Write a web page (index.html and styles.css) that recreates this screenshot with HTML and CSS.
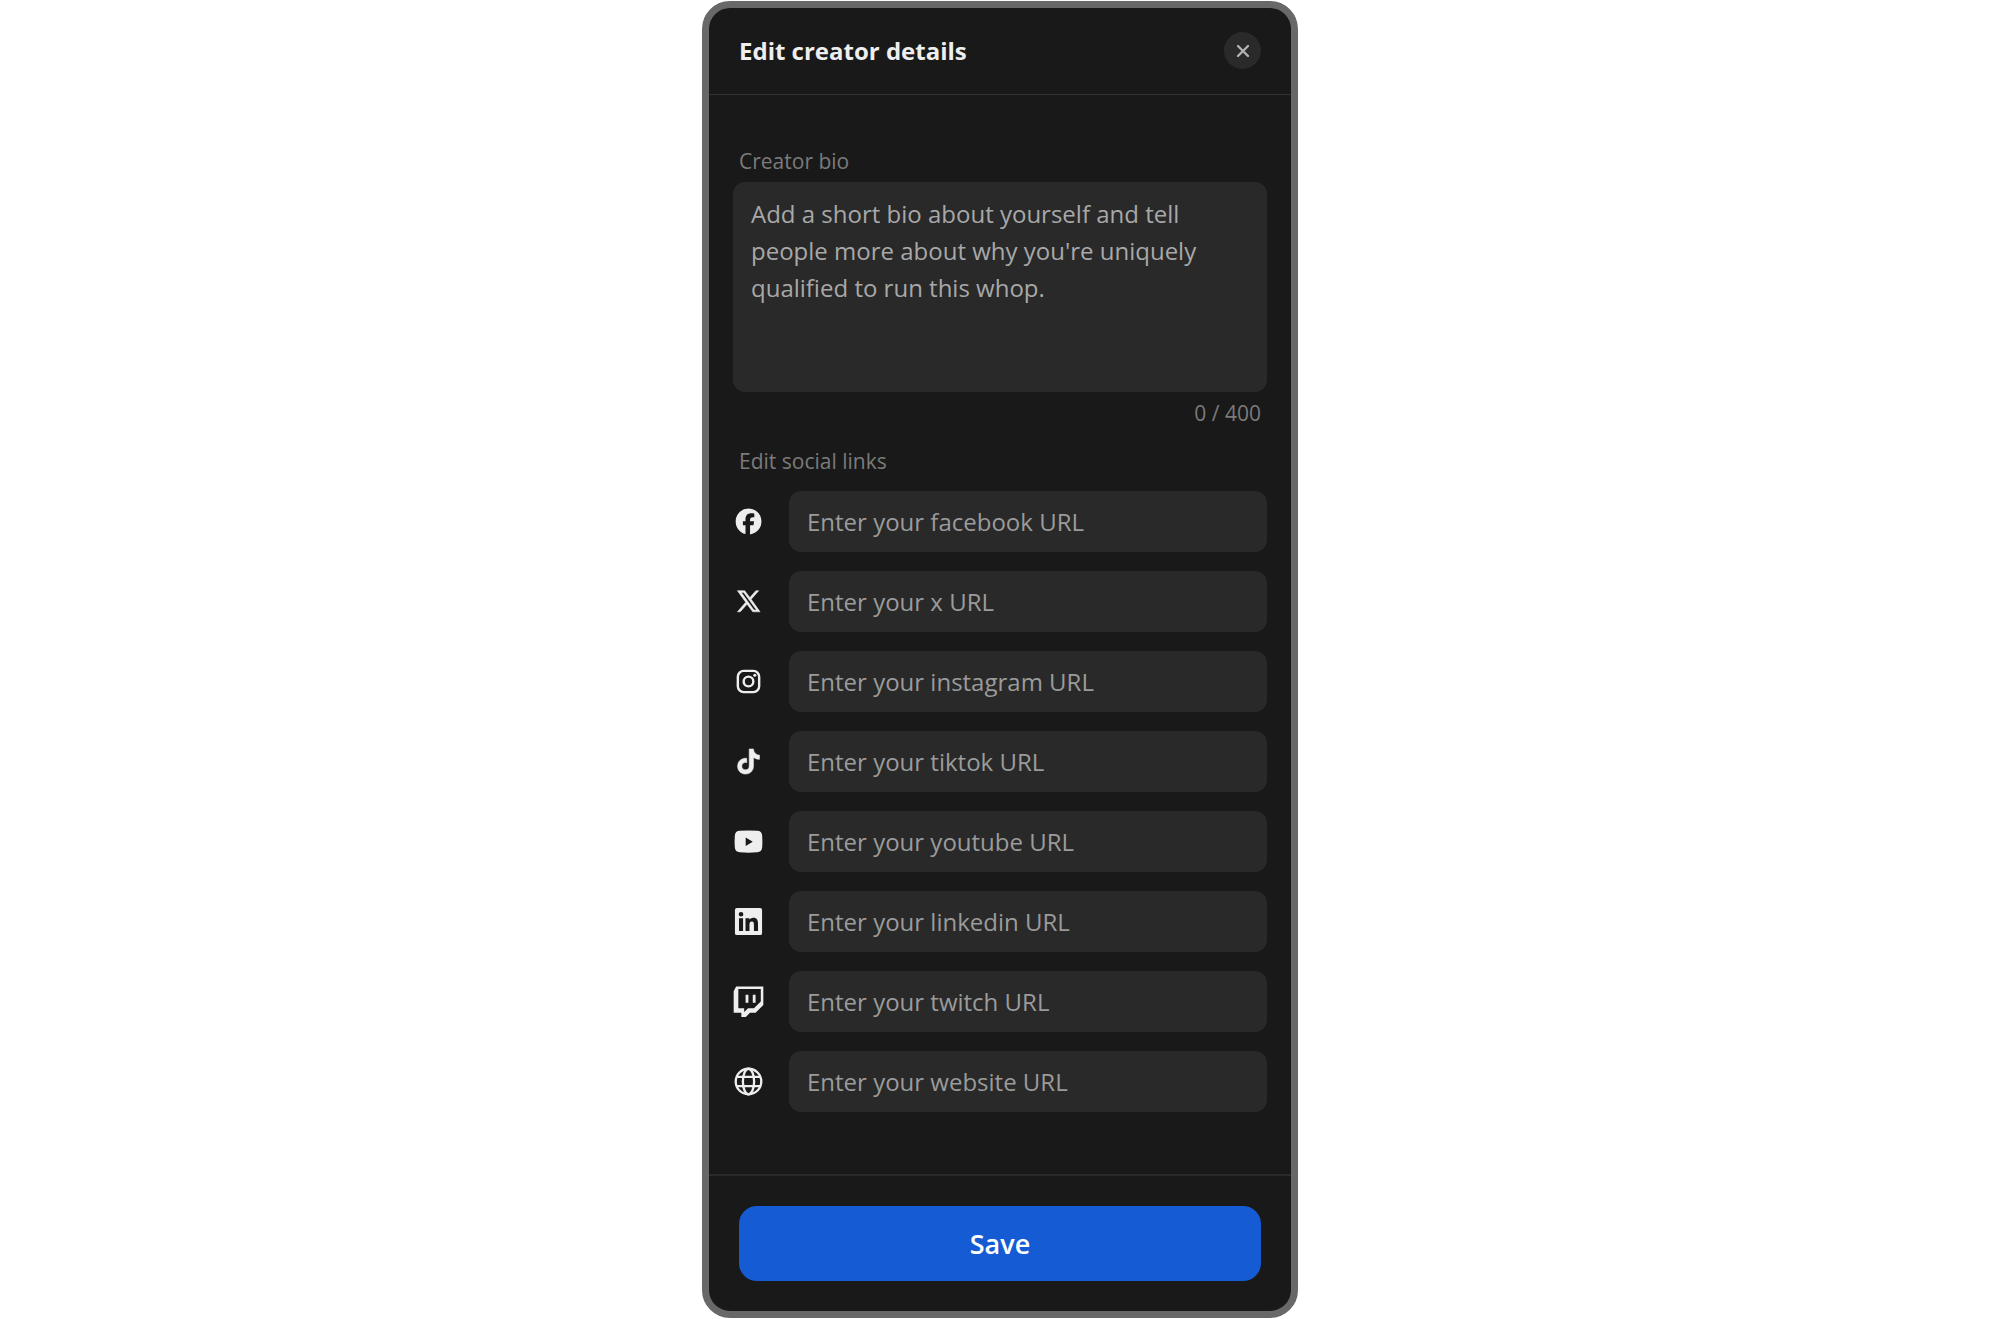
FILE: index.html
```html
<!DOCTYPE html>
<html lang="en">
  <head>
    <meta charset="utf-8" />
    <meta name="viewport" content="width=device-width, initial-scale=1" />
    <title>Edit creator details</title>

    <link rel="stylesheet" href="styles.css">
  </head>

  <body>
    <form class="modal">
      <header class="modal-header">
        <h1 class="title">Edit creator details</h1>
        <button type="button" class="close" aria-label="Close">
          <svg viewBox="0 0 14 14" width="14" height="14">
            <path d="M2 2l10 10M12 2L2 12" fill="none" stroke="currentColor" stroke-width="2.3" stroke-linecap="round" />
          </svg>
        </button>
      </header>

      <main class="modal-body">
        <label class="label" for="bio">Creator bio</label>
        <textarea class="field bio" id="bio" maxlength="400" placeholder="Add a short bio about yourself and tell people more about why you're uniquely qualified to run this whop."></textarea>
        <p class="counter">0 / 400</p>

        <h2 class="label links-label">Edit social links</h2>
        <div class="links">
          <div class="link-row">
            <label class="icon" for="facebook" aria-label="Facebook">
              <svg viewBox="0 0 32 32">
                <path d="M16 2.6a13.4 13.4 0 0 0-3.1 26.4v-9.2h-2.7v-4h2.7v-1.7c0-4.4 2-6.5 6.3-6.5.8 0 2.3.2 2.8.3v3.6c-.3 0-.8 0-1.5 0-2.1 0-2.9.8-2.9 2.9v1.4h4.2l-.7 4h-3.5v9.5A13.4 13.4 0 0 0 16 2.6z" />
              </svg>
            </label>
            <input class="field" type="url" id="facebook" placeholder="Enter your facebook URL" />
          </div>

          <div class="link-row">
            <label class="icon" for="x" aria-label="X">
              <svg viewBox="0 0 32 32">
                <path fill-rule="evenodd" stroke="currentColor" stroke-width=".5" d="M4.5 4.8h7.6l5.3 7.1 6.2-7.1h3L18.8 13.8l9.2 12.9h-7.6l-5.9-7.9-7 7.9h-3l8.6-9.8zM8.6 6.7l13 18.1h2.6L11.1 6.7z" />
              </svg>
            </label>
            <input class="field" type="url" id="x" placeholder="Enter your x URL" />
          </div>

          <div class="link-row">
            <label class="icon" for="instagram" aria-label="Instagram">
              <svg viewBox="0 0 32 32">
                <g fill="none" stroke="currentColor" stroke-width="2.5">
                  <rect x="5" y="5" width="22" height="22" rx="6" />
                  <circle cx="16" cy="16" r="5" />
                </g>
                <circle cx="22.5" cy="9.6" r="1.6" />
              </svg>
            </label>
            <input class="field" type="url" id="instagram" placeholder="Enter your instagram URL" />
          </div>

          <div class="link-row">
            <label class="icon" for="tiktok" aria-label="TikTok">
              <svg viewBox="0 0 32 32">
                <path stroke="currentColor" stroke-width=".5" d="M16.7 3h4.4c.3 3.7 2.7 6.2 6.3 6.4v4.4c-2.3 0-4.4-.7-6.2-2v8.7c0 5.3-3.6 8.5-8.2 8.5s-8.3-3.5-8.3-8.2c0-5.1 4.2-8.7 9.5-8.1v4.5c-2.8-.8-5.1.9-5.1 3.6 0 2.2 1.7 3.8 3.9 3.8 2.4 0 3.7-1.5 3.7-4.2z" />
              </svg>
            </label>
            <input class="field" type="url" id="tiktok" placeholder="Enter your tiktok URL" />
          </div>

          <div class="link-row">
            <label class="icon" for="youtube" aria-label="YouTube">
              <svg viewBox="0 0 32 32">
                <path fill-rule="evenodd" d="M7 4.9q9-.6 18 0c3.2.2 4.8 1.6 5.1 4.8q.5 6.3 0 12.6c-.3 3.2-1.9 4.6-5.1 4.9q-9 .6-18 0c-3.2-.3-4.8-1.7-5.1-4.9q-.5-6.3 0-12.6C2.2 6.5 3.8 5.1 7 4.9zM13.1 11.8v8.8l7.3-4.4z" />
              </svg>
            </label>
            <input class="field" type="url" id="youtube" placeholder="Enter your youtube URL" />
          </div>

          <div class="link-row">
            <label class="icon" for="linkedin" aria-label="LinkedIn">
              <svg viewBox="0 0 32 32">
                <path fill-rule="evenodd" d="M4 2h24a2 2 0 0 1 2 2v24a2 2 0 0 1-2 2H4a2 2 0 0 1-2-2V4a2 2 0 0 1 2-2zM6.2 12.6v13.1h4.2V12.6zM8.3 6.1a2.4 2.4 0 1 0 0 4.8 2.4 2.4 0 0 0 0-4.8zM12.9 12.6v13.1H17v-6.5c0-1.7.4-3.3 2.5-3.3 2 0 2.1 1.9 2.1 3.4v6.4h4.2v-7.2c0-3.5-.8-6.3-4.9-6.3-2 0-3.3 1.1-3.9 2.1v-1.7z" />
              </svg>
            </label>
            <input class="field" type="url" id="linkedin" placeholder="Enter your linkedin URL" />
          </div>

          <div class="link-row">
            <label class="icon" for="twitch" aria-label="Twitch">
              <svg viewBox="0 0 32 32">
                <path fill-rule="evenodd" d="M3.2.6H31.3V19.6l-8 8h-5.7L13.2 32H8.6v-4.4H.7V5.5zM5.5 3.2v19.7h6v3.9l4-3.9h6.1L28.7 16V3.2z" />
                <path d="M13 9h2.9v8.3H13zM20.4 9h2.9v8.3h-2.9z" />
              </svg>
            </label>
            <input class="field" type="url" id="twitch" placeholder="Enter your twitch URL" />
          </div>

          <div class="link-row">
            <label class="icon" for="website" aria-label="Website">
              <svg viewBox="0 0 32 32">
                <g fill="none" stroke="currentColor" stroke-width="2.4">
                  <circle cx="16" cy="16" r="13.2" />
                  <ellipse cx="16" cy="16" rx="5.8" ry="13.2" />
                  <path d="M3.8 11.3h24.4M3.8 20.7h24.4" />
                </g>
              </svg>
            </label>
            <input class="field" type="url" id="website" placeholder="Enter your website URL" />
          </div>
        </div>
      </main>

      <footer class="modal-footer">
        <button type="button" class="save">Save</button>
      </footer>
    </form>
  </body>
</html>
```
FILE: styles.css
```css
* {
  box-sizing: border-box;
}
body {
  margin: 0;
  padding: 1px 0;
  background: #fff;
  font-family: "Segoe UI", "Open Sans", "Noto Sans", sans-serif;
}
.modal {
  max-width: 596px;
  margin: 0 auto;
  border: 7px solid #686868;
  border-radius: 28px;
  background: #191919;
  color: #eee;
}
.modal-header {
  display: flex;
  align-items: center;
  justify-content: space-between;
  padding: 24px 30px 25px;
  border-bottom: 1px solid #313131;
}
.title {
  margin: 0;
  font-size: 24px;
  line-height: 37px;
  font-weight: 700;
}
.close {
  display: flex;
  align-items: center;
  justify-content: center;
  width: 37px;
  height: 37px;
  padding: 0;
  border: none;
  border-radius: 50%;
  background: #2a2a2a;
  color: #b4b4b4;
}
.modal-body {
  padding: 51px 24px 62px;
}
.label {
  display: block;
  margin: 0;
  padding: 0 6px;
  color: #7b7b7b;
  font-size: 21px;
  line-height: 30px;
  font-weight: 400;
}
.field {
  display: block;
  width: 100%;
  min-width: 0;
  height: 61px;
  padding: 0 18px;
  border: none;
  border-radius: 12px;
  background: #292929;
  color: #eee;
  font-family: inherit;
  font-size: 24px;
}
.field::placeholder {
  color: #9b9b9b;
  opacity: 1;
}
.bio {
  height: 210px;
  margin-top: 6px;
  padding: 13px 18px;
  line-height: 37px;
  resize: none;
}
.bio::placeholder {
  color: #a8a8a8;
}
.counter {
  margin: 6px 0 0;
  padding: 0 6px;
  color: #7b7b7b;
  font-size: 21px;
  line-height: 30px;
  text-align: right;
}
.links-label {
  margin-top: 18px;
}
.links {
  display: grid;
  gap: 19px;
  margin-top: 15px;
}
.link-row {
  display: flex;
  align-items: center;
  gap: 25px;
}
.icon {
  display: flex;
  flex: none;
}
.icon svg {
  width: 31px;
  height: 31px;
  fill: currentColor;
}
.modal-footer {
  padding: 30px;
  border-top: 2px solid #2a2a2a;
}
.save {
  display: block;
  width: 100%;
  height: 75px;
  border: none;
  border-radius: 18px;
  background: #155cd4;
  color: #fff;
  font-family: inherit;
  font-size: 27px;
  font-weight: 600;
}
```
